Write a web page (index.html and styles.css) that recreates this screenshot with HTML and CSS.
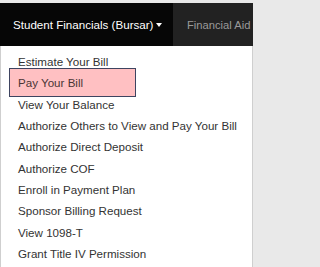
FILE: index.html
```html
<!DOCTYPE html>
<html>
<head>
<meta charset="utf-8">
<link rel="stylesheet" href="styles.css">
</head>
<body>
<div class="page">
  <nav class="navbar">
    <div class="tab tab-active">Student Financials (Bursar)<span class="caret"></span></div>
    <div class="tab tab-other">Financial Aid</div>
  </nav>
  <ul class="menu">
    <li>Estimate Your Bill</li>
    <li class="marked"><span class="mark"></span><span class="label">Pay Your Bill</span></li>
    <li>View Your Balance</li>
    <li>Authorize Others to View and Pay Your Bill</li>
    <li>Authorize Direct Deposit</li>
    <li>Authorize COF</li>
    <li>Enroll in Payment Plan</li>
    <li>Sponsor Billing Request</li>
    <li>View 1098-T</li>
    <li>Grant Title IV Permission</li>
  </ul>
</div>
</body>
</html>
```
FILE: styles.css
```css
html, body {
  margin: 0;
  padding: 0;
  background: #e9e9e9;
}
body {
  font-family: "Liberation Sans", Arial, sans-serif;
  width: 255px;
  height: 267px;
  overflow: hidden;
}
.page {
  padding-top: 3px;
  display: flex;
  flex-direction: column;
  width: 255px;
}
.navbar {
  display: flex;
  height: 43px;
  background: #222;
  width: 253px;
}
.tab {
  display: flex;
  align-items: center;
  font-size: 11.6px;
  height: 100%;
  box-sizing: border-box;
  white-space: nowrap;
}
.tab-active {
  background: #060606;
  color: #fff;
  width: 173px;
  padding-left: 13px;
}
.caret {
  display: inline-block;
  width: 0;
  height: 0;
  margin-left: 3px;
  border-left: 3.5px solid transparent;
  border-right: 3.5px solid transparent;
  border-top: 4px solid #fff;
}
.tab-other {
  color: #9a9a9a;
  font-size: 11.2px;
  padding-left: 14px;
  flex: 1;
  overflow: hidden;
}
.menu {
  list-style: none;
  margin: 0;
  padding: 5px 0 0 0;
  background: #fff;
  width: 251px;
  height: 221px;
  border-left: 1px solid #cfcfcf;
  border-right: 1px solid #cfcfcf;
  box-sizing: content-box;
}
.menu li {
  font-size: 11.6px;
  color: #333;
  height: 21.33px;
  line-height: 21.33px;
  padding-left: 17px;
  white-space: nowrap;
  position: relative;
}
.mark {
  position: absolute;
  left: 8px;
  top: -4px;
  width: 125px;
  height: 27px;
  background: #ffc0c2;
  border: 1px solid #3e4460;
}
.label {
  position: relative;
  color: #4a3535;
}
```
